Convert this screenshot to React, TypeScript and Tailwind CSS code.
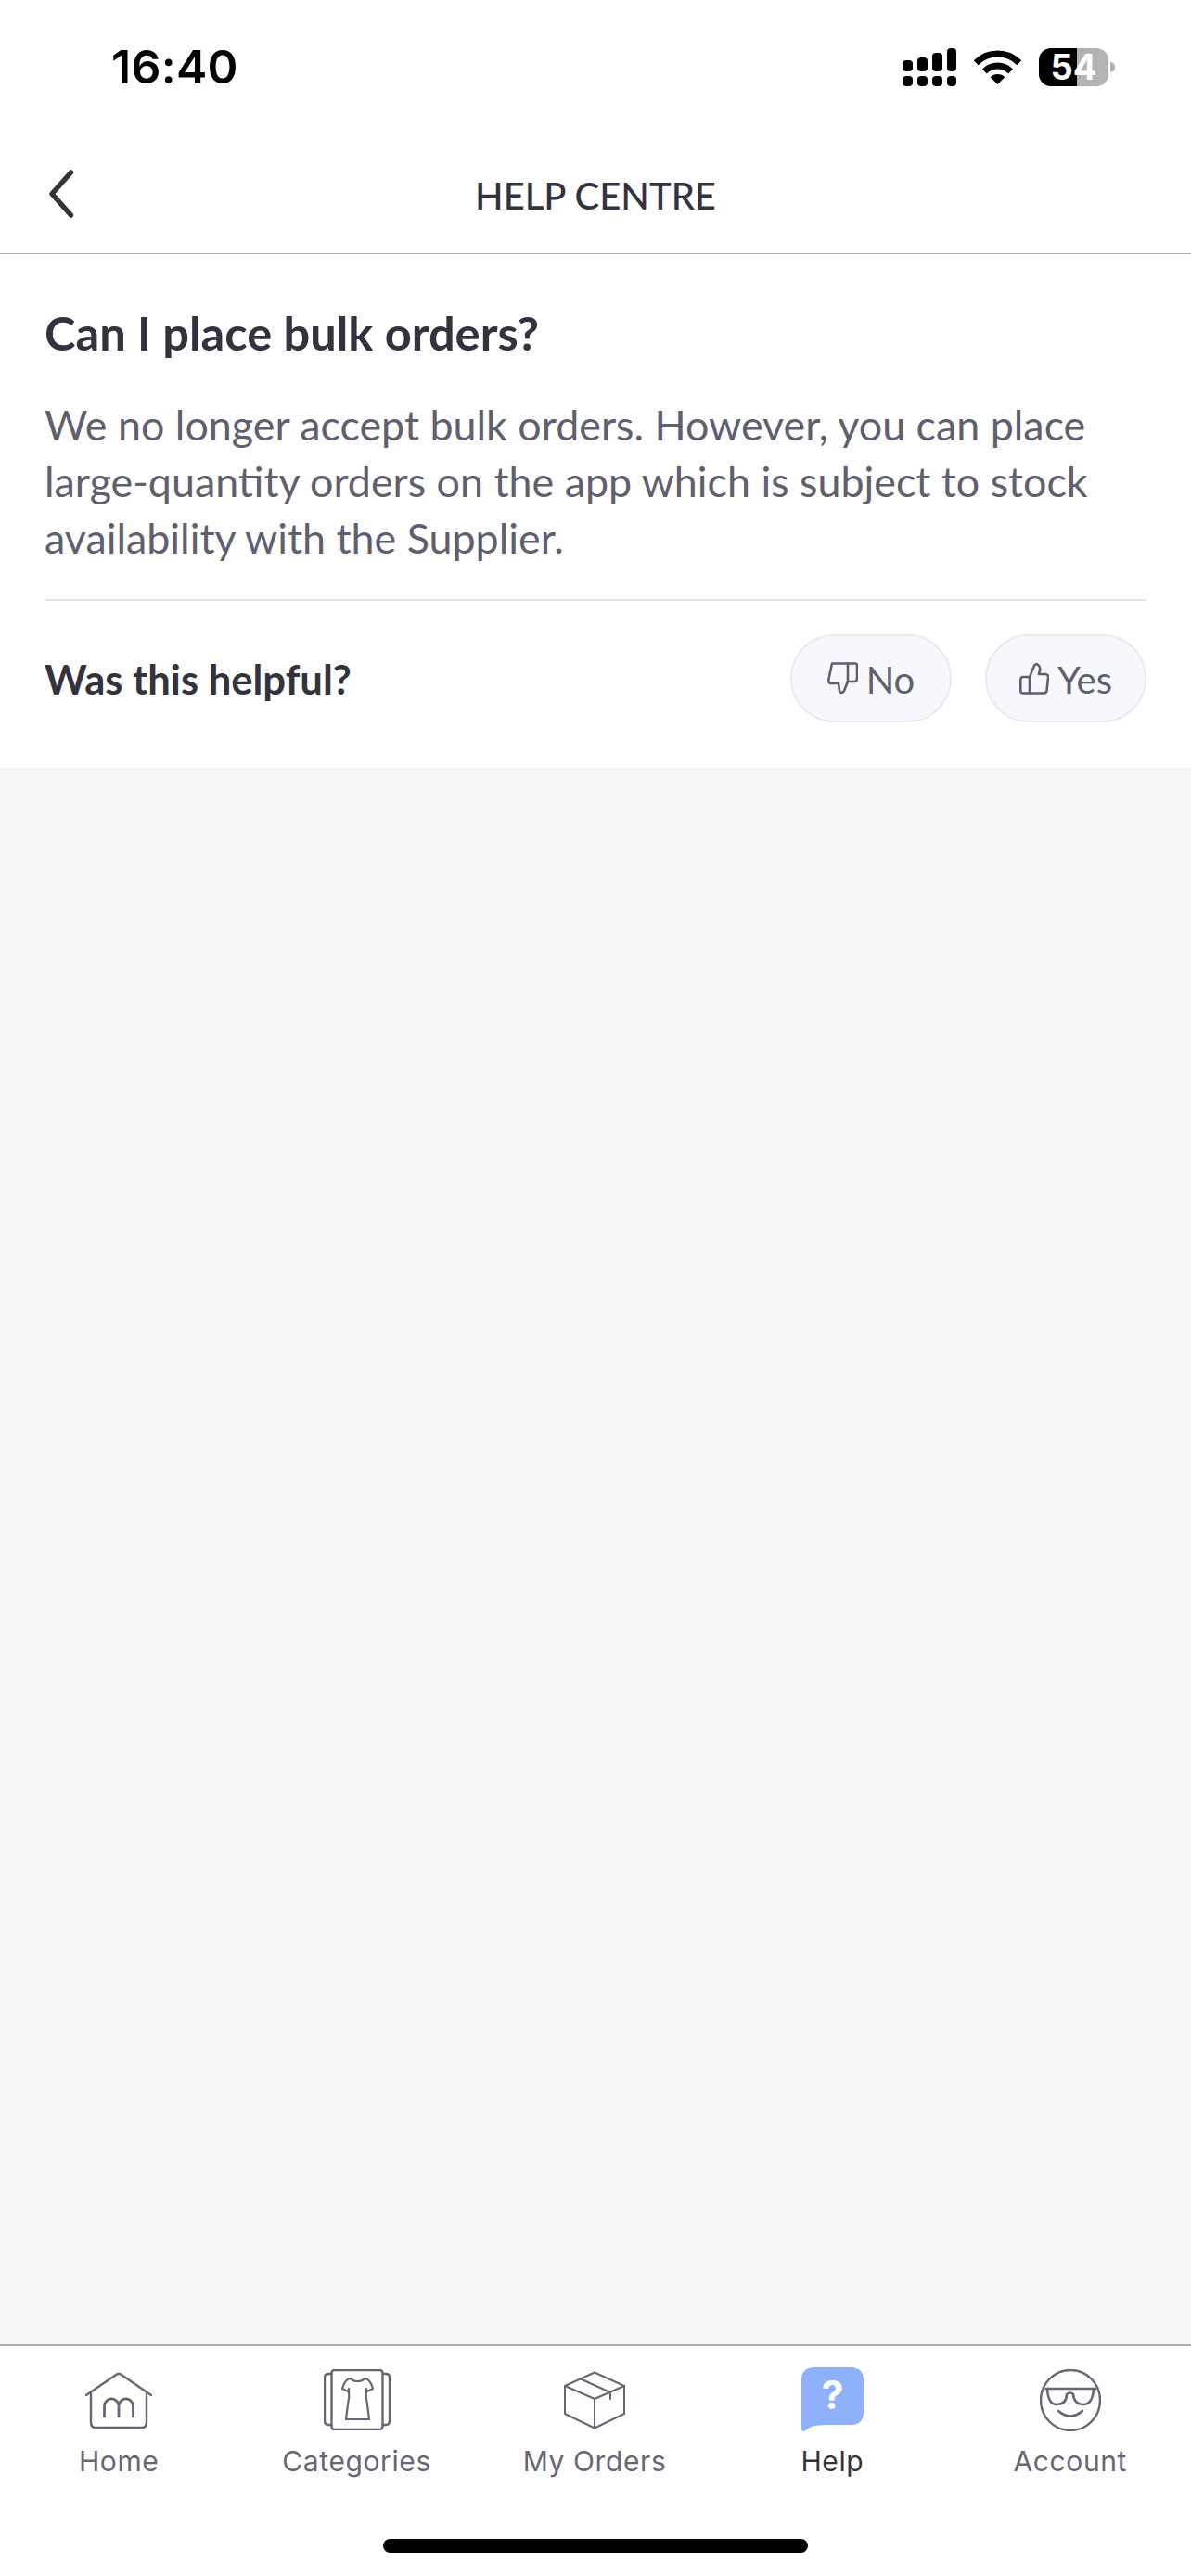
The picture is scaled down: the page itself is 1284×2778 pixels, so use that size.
const tabs = [
  { label: "Home", icon: <HomeIcon /> },
  { label: "Categories", icon: <CategoriesIcon /> },
  { label: "My Orders", icon: <BoxIcon /> },
  { label: "Help", icon: <HelpIcon />, active: true },
  { label: "Account", icon: <AccountIcon /> },
];

function SignalIcon() {
  return (
    <svg width="58" height="41" viewBox="0 0 58 41" fill="#000">
      <rect x="0" y="13" width="11" height="12" rx="4" />
      <rect x="16" y="10" width="11" height="15" rx="4" />
      <rect x="32" y="5" width="11" height="20" rx="4" />
      <rect x="48" y="0" width="10" height="25" rx="4" />
      <rect x="0" y="30" width="11" height="11" rx="4" />
      <rect x="16" y="30" width="11" height="11" rx="4" />
      <rect x="32" y="30" width="11" height="11" rx="4" />
      <rect x="48" y="30" width="10" height="11" rx="4" />
    </svg>
  );
}

function WifiIcon() {
  return (
    <svg width="51" height="37" viewBox="0 0 51 37" fill="none" stroke="#000" strokeWidth="7">
      <path d="M2.2 13.7 A33 33 0 0 1 48.8 13.7" />
      <path d="M11.4 22.9 A20 20 0 0 1 39.6 22.9" />
      <path d="M25.5 37 L17.7 29.2 A11 11 0 0 1 33.3 29.2 Z" fill="#000" stroke="none" />
    </svg>
  );
}

function BackIcon() {
  return (
    <svg width="28" height="52" viewBox="0 0 28 52" fill="none" stroke="#333" strokeWidth="5.5" strokeLinecap="round" strokeLinejoin="round">
      <path d="M24.5 3 L4 26 L24.5 49" />
    </svg>
  );
}

function ThumbDown() {
  return (
    <svg width="33" height="35" viewBox="0 0 33 35" fill="none" stroke="#5f5f6e" strokeWidth="2.6" strokeLinejoin="round" strokeLinecap="round">
      <path d="M5 1.5 H30 Q32 1.5 32 3.5 V18 Q32 21 29 21 H22 L18 31 Q15 35 13 31 L12 23 H4 Q1 23 1.3 19 Z" />
      <path d="M22 1.5 V21" />
    </svg>
  );
}

function ThumbUp() {
  return (
    <svg width="32" height="34" viewBox="0 0 32 34" fill="none" stroke="#5f5f6e" strokeWidth="2.6" strokeLinejoin="round" strokeLinecap="round">
      <path d="M11 32.5 H4 Q1.3 32.5 1.3 30 V18 Q1.3 15 4 15 H11 L16 3 Q18 0 20 2 Q23 4 22 8 L21 12 H28 Q31.5 12 31 16 L29.5 30 Q29 32.5 26 32.5 Z" />
      <path d="M11 15 V32.5" />
    </svg>
  );
}

function HomeIcon() {
  return (
    <svg width="72" height="61" viewBox="0 0 72 61" fill="none" stroke="#666675" strokeWidth="2.4" strokeLinecap="round" strokeLinejoin="round">
      <path d="M1 25 L33 3 Q36 1 39 3 L71 25" />
      <path d="M6 22 V54 Q6 60 11 60 H61 Q66 60 66 54 V22" />
      <path d="M20.5 48 V36 A7.8 8 0 0 1 36 36 V48 M36 36 A7.8 8 0 0 1 51.5 36 V48" strokeWidth="2.8" />
    </svg>
  );
}

function CategoriesIcon() {
  return (
    <svg width="72" height="66" viewBox="0 0 72 66" fill="none" stroke="#666675" strokeWidth="2.4" strokeLinecap="round" strokeLinejoin="round">
      <rect x="8.5" y="1" width="55" height="64" rx="3" />
      <path d="M8.5 5 H5 Q1 5 1 9 V55 Q1 60 5 60 H8.5" />
      <path d="M63.5 5 H67 Q71 5 71 9 V55 Q71 60 67 60 H63.5" />
      <path d="M29 10 C32 14 41 14 44 10 C48 10 51 14 53 21 L47 24 L46 21 Q45 30 47 38 L49 54 H24 L26 38 Q28 30 27 21 L26 24 L20 21 C22 14 25 10 29 10 Z" strokeWidth="2.2" />
    </svg>
  );
}

function BoxIcon() {
  return (
    <svg width="66" height="63" viewBox="0 0 66 63" fill="none" stroke="#666675" strokeWidth="2" strokeLinecap="round" strokeLinejoin="round">
      <path d="M33 1.5 L65 16 V46 L33 61.5 L1 46 V16 Z" />
      <path d="M1 16 L33 30 L65 16 M33 30 V61.5 M17 8 L50 23 V30" />
    </svg>
  );
}

function HelpIcon() {
  return (
    <svg width="67" height="70" viewBox="0 0 67 70">
      <path d="M14 0 H53 Q67 0 67 14 V48 Q67 62 53 62 H30 C14 62 8 64 5 68 Q0 71 0 65 V14 Q0 0 14 0 Z" fill="#8fb1fb" />
      <text x="33.5" y="45" textAnchor="middle" fill="#fff" fontSize="43" fontWeight="700" fontFamily="Inter, sans-serif">?</text>
    </svg>
  );
}

function AccountIcon() {
  return (
    <svg width="66" height="67" viewBox="0 0 66 67" fill="none" stroke="#666675" strokeWidth="2.4" strokeLinecap="round" strokeLinejoin="round">
      <ellipse cx="33" cy="33.5" rx="32" ry="32.5" />
      <path d="M6.5 21 H60" strokeWidth="2.6" />
      <path d="M8 21 Q9 38 18 38 Q29 38 29 27 Q33 24 36 27 Q37 38 47 38 Q57 38 58 21" strokeWidth="2.6" />
      <path d="M20 45 Q33 56 46 45" strokeWidth="2.6" />
    </svg>
  );
}

function HelpButton({ label, icon }: { label: string; icon: React.ReactNode }) {
  return (
    <button className="flex h-[95px] w-[174px] items-center justify-center gap-[9px] rounded-full border-2 border-[#e9e9f0] bg-[#f7f8fd] text-[40px] text-[#5f5f6e]">
      {icon}
      <span className="pt-[3px]">{label}</span>
    </button>
  );
}

export default function App() {
  return (
    <div className="flex h-[2778px] w-[1284px] flex-col overflow-hidden bg-white font-['Lato',sans-serif]">
      <div className="flex h-[150px] items-start justify-between pt-[52px] pl-[120px] pr-[82px]">
        <span className="font-['Inter',sans-serif] text-[50px] leading-[40px] font-semibold tracking-[0.3px] text-black">16:40</span>
        <div className="flex items-start">
          <SignalIcon />
          <div className="ml-[19px] mt-[2px]"><WifiIcon /></div>
          <div className="ml-[19px] flex items-center">
            <div className="flex h-[41px] w-[75px] items-center justify-center rounded-[13px] bg-[linear-gradient(90deg,#000_55%,#b3b3b3_55%)] font-['Inter',sans-serif] text-[38px] font-bold text-white">
              54
            </div>
            <div className="ml-[2px] h-[11px] w-[5px] rounded-r-full bg-[#b3b3b3]" />
          </div>
        </div>
      </div>

      <header className="relative flex h-[124px] items-center justify-center border-b border-[#b0b0b0] pb-[2px]">
        <div className="absolute left-[52px] top-[33px]"><BackIcon /></div>
        <h1 className="text-[40px] font-medium text-[#33333f]">HELP CENTRE</h1>
      </header>

      <section className="bg-white px-[48px] pt-[56px] pb-[49px]">
        <h2 className="text-[50.6px] leading-[58px] font-bold text-[#33333f]">Can I place bulk orders?</h2>
        <p className="mt-[40px] text-[44.8px] leading-[61px] text-[#5f5f70]">
          We no longer accept bulk orders. However, you can place large-quantity orders on the app which is subject to stock availability with the Supplier.
        </p>
        <div className="mt-[35px] h-[2px] bg-[#e5e5e5]" />
        <div className="mt-[36px] flex items-center justify-between">
          <span className="pt-[3px] text-[43.6px] font-bold text-[#33333f]">Was this helpful?</span>
          <div className="flex gap-[36px]">
            <HelpButton label="No" icon={<ThumbDown />} />
            <HelpButton label="Yes" icon={<ThumbUp />} />
          </div>
        </div>
      </section>

      <main className="flex-1 bg-[#f6f6f6]" />

      <nav className="h-[250px] border-t-2 border-[#b0b0b0] bg-white">
        <div className="grid grid-cols-5 pt-[23px] pr-[2px]">
          {tabs.map((tab) => (
            <div key={tab.label} className="flex flex-col items-center">
              <div className="flex h-[70px] items-center justify-center">{tab.icon}</div>
              <span className={`mt-[13px] font-['Inter',sans-serif] text-[30px] leading-[36px] tracking-[0.6px] ${tab.active ? "text-[#333340]" : "text-[#666675]"}`}>
                {tab.label}
              </span>
            </div>
          ))}
        </div>
        <div className="mx-auto mt-[66px] h-[15px] w-[458px] rounded-full bg-black" />
      </nav>
    </div>
  );
}
